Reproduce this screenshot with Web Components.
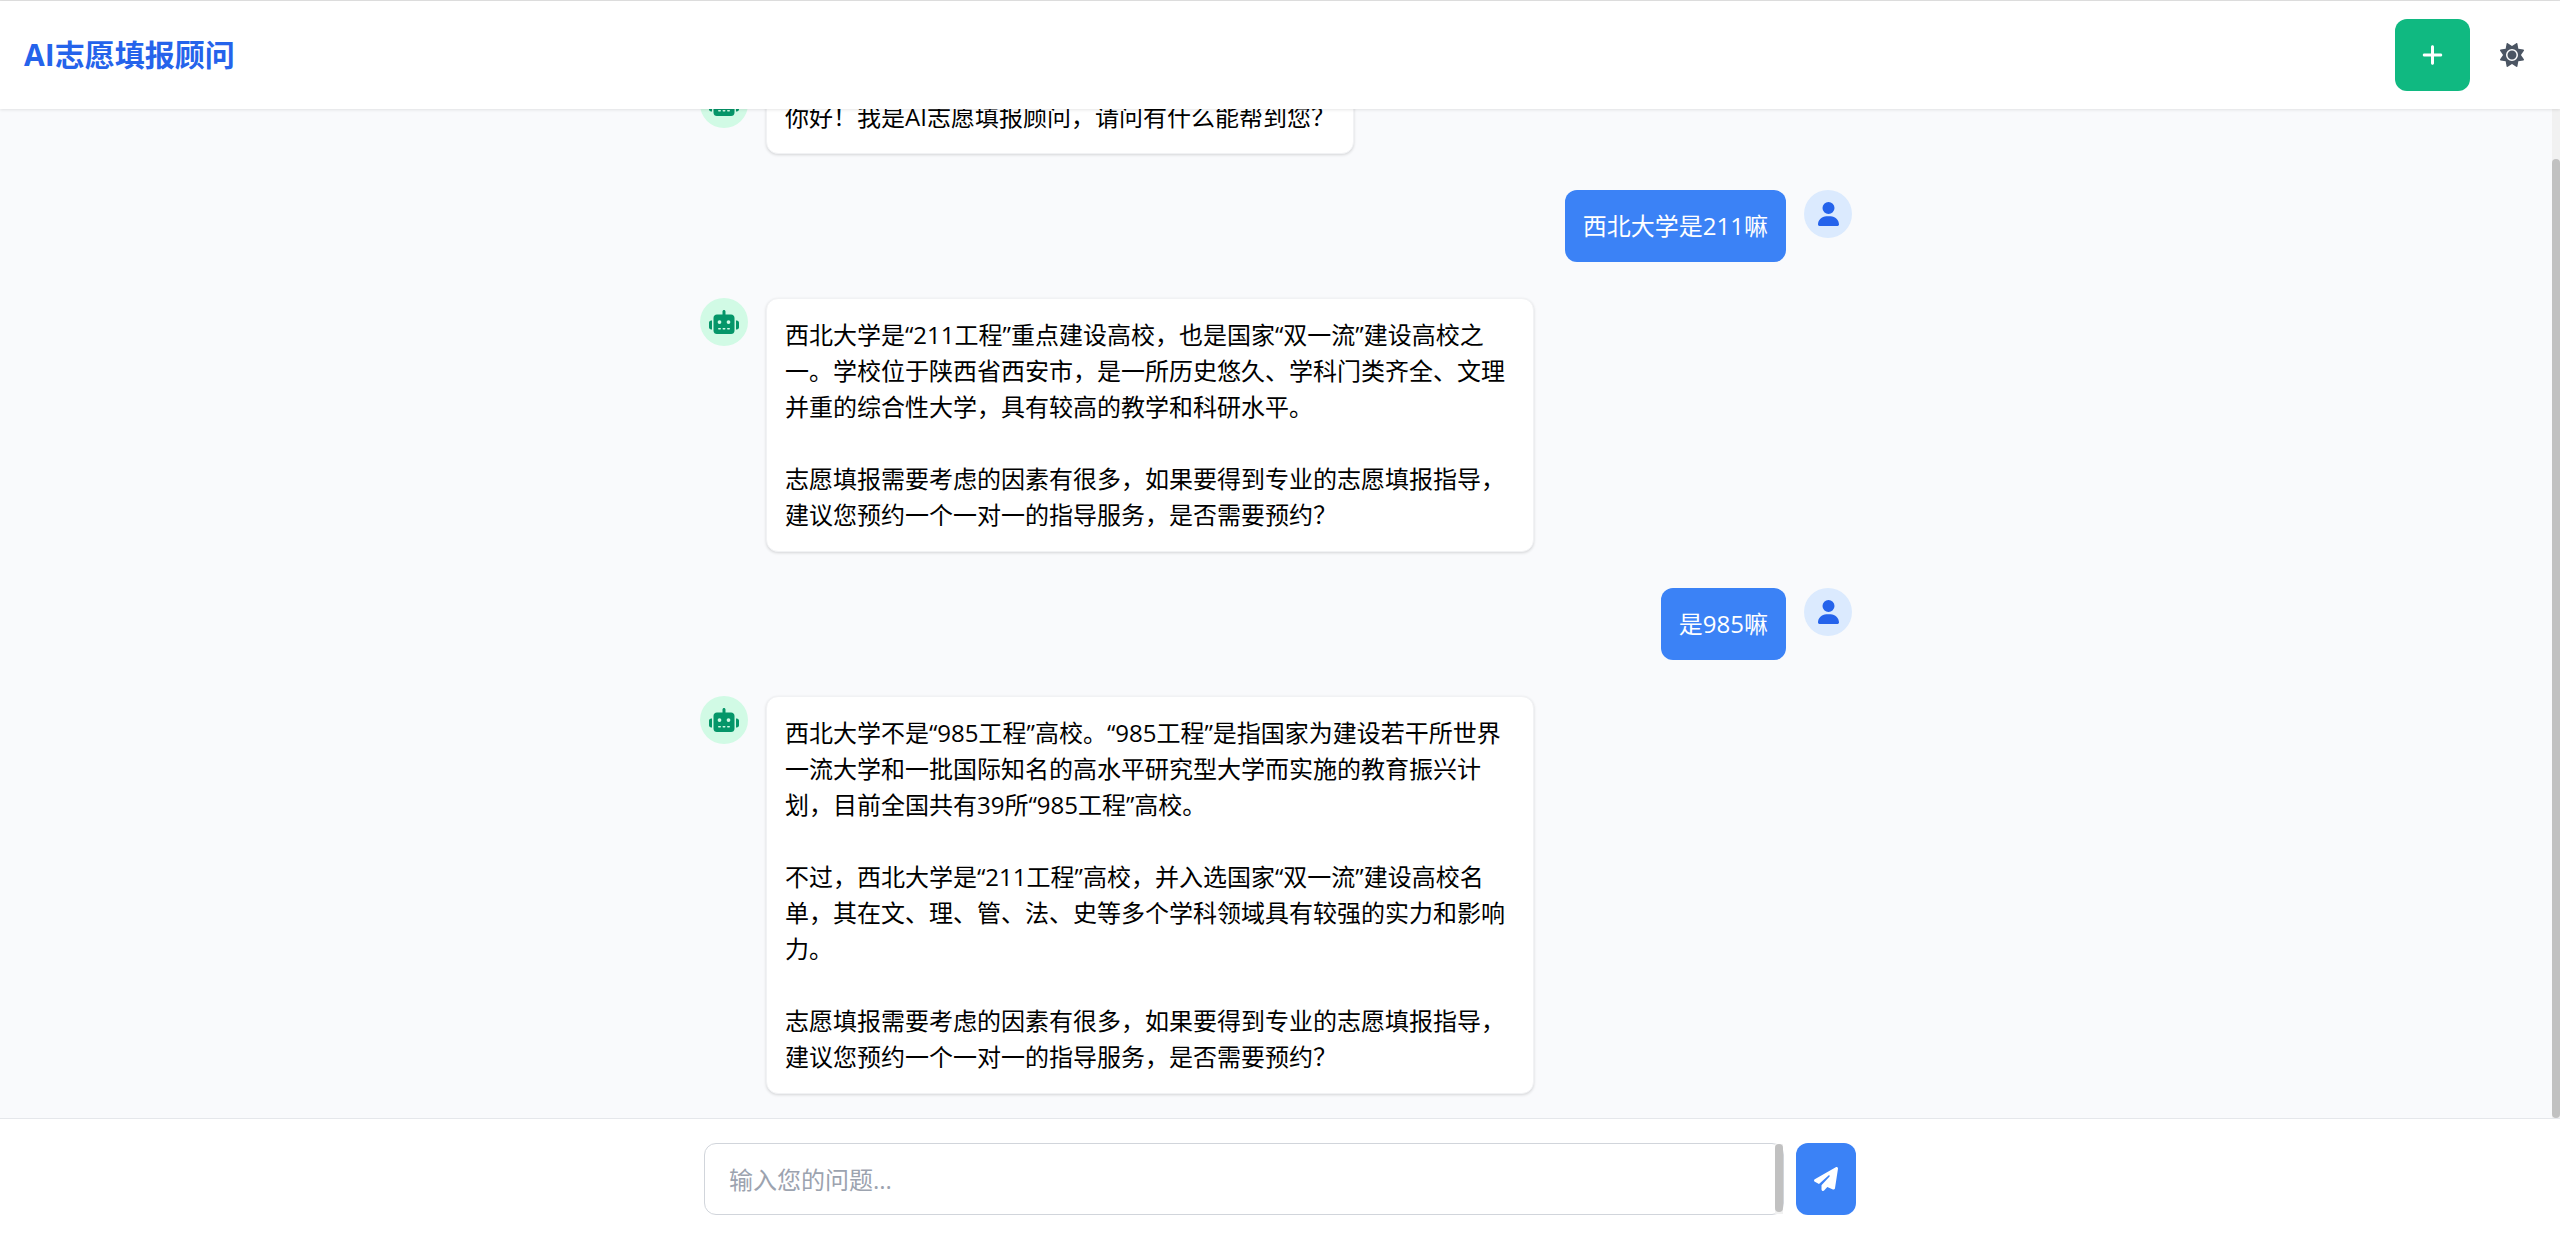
<!DOCTYPE html>
<html lang="zh-CN">
<head>
<meta charset="utf-8">
<meta name="viewport" content="width=device-width, initial-scale=1">
<title>AI志愿填报顾问</title>
<style>
  html { height: 100%; overflow: hidden; }
  body {
    margin: 0;
    height: 100%;
    color: #000;
    font: 24px/36px "Open Sans", "Noto Sans CJK SC", sans-serif;
  }
</style>
</head>
<body>
<chat-app>
  <chat-header slot="header">AI志愿填报顾问</chat-header>
  <chat-log slot="log">
    <chat-message from="bot"><p>你好！我是AI志愿填报顾问，请问有什么能帮到您？</p></chat-message>
    <chat-message from="user"><p>西北大学是211嘛</p></chat-message>
    <chat-message from="bot"><p>西北大学是“211工程”重点建设高校，也是国家“双一流”建设高校之一。学校位于陕西省西安市，是一所历史悠久、学科门类齐全、文理并重的综合性大学，具有较高的教学和科研水平。</p><p>志愿填报需要考虑的因素有很多，如果要得到专业的志愿填报指导，建议您预约一个一对一的指导服务，是否需要预约？</p></chat-message>
    <chat-message from="user"><p>是985嘛</p></chat-message>
    <chat-message from="bot"><p>西北大学不是“985工程”高校。“985工程”是指国家为建设若干所世界一流大学和一批国际知名的高水平研究型大学而实施的教育振兴计划，目前全国共有39所“985工程”高校。</p><p>不过，西北大学是“211工程”高校，并入选国家“双一流”建设高校名单，其在文、理、管、法、史等多个学科领域具有较强的实力和影响力。</p><p>志愿填报需要考虑的因素有很多，如果要得到专业的志愿填报指导，建议您预约一个一对一的指导服务，是否需要预约？</p></chat-message>
  </chat-log>
  <chat-composer slot="composer"></chat-composer>
</chat-app>

<script>
const icons = {
  plus: [448, 'M256 80c0-17.7-14.3-32-32-32s-32 14.3-32 32V224H48c-17.7 0-32 14.3-32 32s14.3 32 32 32H192V432c0 17.7 14.3 32 32 32s32-14.3 32-32V288H400c17.7 0 32-14.3 32-32s-14.3-32-32-32H256V80z'],
  sun: [512, 'M361.5 1.2c5 2.1 8.6 6.6 9.6 11.9L391 121l107.9 19.8c5.3 1 9.8 4.6 11.9 9.6s1.5 10.7-1.6 15.2L446.9 256l62.3 90.3c3.1 4.5 3.7 10.2 1.6 15.2s-6.6 8.6-11.9 9.6L391 391 371.1 498.9c-1 5.3-4.6 9.8-9.6 11.9s-10.7 1.5-15.2-1.6L256 446.9l-90.3 62.3c-4.5 3.1-10.2 3.7-15.2 1.6s-8.6-6.6-9.6-11.9L121 391 13.1 371.1c-5.3-1-9.8-4.6-11.9-9.6s-1.5-10.7 1.6-15.2L65.1 256 2.8 165.7c-3.1-4.5-3.7-10.2-1.6-15.2s6.6-8.6 11.9-9.6L121 121 140.9 13.1c1-5.3 4.6-9.8 9.6-11.9s10.7-1.5 15.2 1.6L256 65.1 346.3 2.8c4.5-3.1 10.2-3.7 15.2-1.6zM160 256a96 96 0 1 1 192 0 96 96 0 1 1 -192 0zm224 0a128 128 0 1 0 -256 0 128 128 0 1 0 256 0z'],
  robot: [640, 'M320 0c17.7 0 32 14.3 32 32V96H472c39.8 0 72 32.2 72 72V440c0 39.8-32.2 72-72 72H168c-39.8 0-72-32.2-72-72V168c0-39.8 32.2-72 72-72H288V32c0-17.7 14.3-32 32-32zM208 384c-8.8 0-16 7.2-16 16s7.2 16 16 16h32c8.8 0 16-7.2 16-16s-7.2-16-16-16H208zm96 0c-8.8 0-16 7.2-16 16s7.2 16 16 16h32c8.8 0 16-7.2 16-16s-7.2-16-16-16H304zm96 0c-8.8 0-16 7.2-16 16s7.2 16 16 16h32c8.8 0 16-7.2 16-16s-7.2-16-16-16H400zM264 256a40 40 0 1 0 -80 0 40 40 0 1 0 80 0zm152 40a40 40 0 1 0 0-80 40 40 0 1 0 0 80zM48 224H64V416H48c-26.5 0-48-21.5-48-48V272c0-26.5 21.5-48 48-48zm544 0c26.5 0 48 21.5 48 48v96c0 26.5-21.5 48-48 48H576V224h16z'],
  user: [448, 'M224 256A128 128 0 1 0 224 0a128 128 0 1 0 0 256zm-45.7 48C79.8 304 0 383.8 0 482.3C0 498.7 13.3 512 29.7 512H418.3c16.4 0 29.7-13.3 29.7-29.7C448 383.8 368.2 304 269.7 304H178.3z'],
  plane: [512, 'M498.1 5.6c10.1 7 15.4 19.1 13.5 31.2l-64 416c-1.5 9.7-7.4 18.2-16 23s-18.9 5.4-28 1.6L284 427.7l-68.5 74.1c-8.9 9.7-22.9 12.9-35.2 8.1S160 493.2 160 480V396.4c0-4 1.5-7.8 4.2-10.7L331.8 202.8c5.8-6.3 5.6-16-.4-22s-15.7-6.4-22-.7L106 360.8 17.7 316.6C7.1 311.3 .3 300.7 0 288.9s5.9-22.8 16.1-28.7l448-256c10.7-6.1 23.9-5.5 34 1.4z']
};

function define(name, html, setup) {
  const template = document.createElement('template');
  template.innerHTML = html;
  customElements.define(name, class extends HTMLElement {
    connectedCallback() {
      if (this.shadowRoot) return;
      this.attachShadow({ mode: 'open' }).append(template.content.cloneNode(true));
      if (setup) setup(this, this.shadowRoot);
    }
  });
}

define('app-icon', `
  <style>
    :host { display: block; }
    svg { display: block; height: 24px; fill: currentColor; }
  </style>
  <svg aria-hidden="true"><path/></svg>`, (host, root) => {
  const [width, d] = icons[host.getAttribute('name')];
  const svg = root.querySelector('svg');
  svg.setAttribute('viewBox', `0 0 ${width} 512`);
  svg.style.width = `${width * 24 / 512}px`;
  root.querySelector('path').setAttribute('d', d);
});

/* Slim scrollbar: flex weights before, on and after the thumb follow the scrolled element. */
define('scroll-rail', `
  <style>
    :host { display: flex; flex-direction: column; flex: none; width: 8px; background: #f1f1f1; }
    div { flex: 0 1 0px; min-height: 0; }
    .thumb { background: #c1c1c1; border-radius: 4px; }
  </style>
  <div class="before"></div><div class="thumb"></div><div class="after"></div>`, (host, root) => {
  const [before, thumb, after] = root.querySelectorAll('div');
  host.follow = (el, content = () => el.scrollHeight) => {
    const update = () => {
      const total = Math.max(content(), el.clientHeight);
      before.style.flexGrow = el.scrollTop;
      thumb.style.flexGrow = el.clientHeight;
      after.style.flexGrow = Math.max(0, total - el.clientHeight - el.scrollTop);
    };
    el.addEventListener('scroll', update);
    el.addEventListener('input', update);
    new ResizeObserver(update).observe(el);
    update();
    return update;
  };
});

define('chat-header', `
  <style>
    :host {
      display: flex; align-items: center; justify-content: space-between;
      padding: 18px 24px; background: #fff;
      box-shadow: 0 1px 3px rgba(0,0,0,.1);
    }
    h1 { margin: 0; font-size: 30px; line-height: 42px; font-weight: 700; color: #2563eb; }
    .actions { display: flex; align-items: center; gap: 18px; }
    button { display: flex; align-items: center; justify-content: center; border: 0; border-radius: 12px; height: 72px; cursor: pointer; }
    .new { padding: 0 27px; background: #10b981; color: #fff; }
    .theme { padding: 0 12px; background: transparent; color: #4b5563; }
  </style>
  <h1><slot></slot></h1>
  <div class="actions">
    <button class="new" type="button" aria-label="新建对话"><app-icon name="plus"></app-icon></button>
    <button class="theme" type="button" aria-label="切换主题"><app-icon name="sun"></app-icon></button>
  </div>`);

define('chat-message', `
  <style>
    :host { display: flex; align-items: flex-start; gap: 18px; }
    :host([from="user"]) { flex-direction: row-reverse; }
    .avatar {
      flex: none; display: flex; align-items: center; justify-content: center;
      width: 48px; height: 48px; border-radius: 50%;
      background: #d1fae5; color: #059669;
    }
    .bubble {
      display: flex; flex-direction: column; gap: 36px;
      box-sizing: border-box; max-width: 768px; padding: 18px;
      border-radius: 12px; border: 1px solid #f1f2f4; background: #fff;
      box-shadow: 0 1px 3px rgba(0,0,0,.15);
    }
    :host([from="user"]) .avatar { background: #dbeafe; color: #2563eb; }
    :host([from="user"]) .bubble { background: #3b82f6; color: #fff; border: 0; box-shadow: none; }
    ::slotted(p) { margin: 0; }
  </style>
  <div class="avatar"></div>
  <div class="bubble"><slot></slot></div>`, (host, root) => {
  const icon = document.createElement('app-icon');
  icon.setAttribute('name', host.getAttribute('from') === 'user' ? 'user' : 'robot');
  root.querySelector('.avatar').append(icon);
});

define('chat-log', `
  <style>
    :host { display: flex; background: #f9fafc; }
    .view { flex: 1; min-width: 0; overflow-y: auto; scrollbar-width: none; }
    .column { display: flex; flex-direction: column; gap: 36px; max-width: 1152px; margin: 0 auto; padding: 24px 0; }
  </style>
  <div class="view"><div class="column"><slot></slot></div></div>
  <scroll-rail></scroll-rail>`, (host, root) => {
  const view = root.querySelector('.view');
  const update = root.querySelector('scroll-rail').follow(view);
  host.toLatest = () => { view.scrollTop = view.scrollHeight; update(); };
});

define('chat-composer', `
  <style>
    :host { display: block; padding: 24px 24px 23px; border-top: 1px solid #e5e7eb; background: #fff; }
    form { display: flex; gap: 12px; max-width: 1152px; margin: 0 auto; }
    .field {
      display: flex; flex: 1; min-width: 0; box-sizing: border-box; height: 72px;
      border: 1px solid #d1d5db; border-radius: 12px;
    }
    textarea {
      flex: 1; min-width: 0; box-sizing: border-box; height: 70px; margin: 0; padding: 18px 24px;
      font: inherit; color: inherit; background: transparent;
      border: 0; outline: 0; resize: none; scrollbar-width: none;
    }
    textarea::placeholder { color: #9ca3af; }
    button { display: flex; align-items: center; padding: 0 18px; border: 0; border-radius: 12px; background: #3b82f6; color: #fff; cursor: pointer; }
  </style>
  <form>
    <div class="field">
      <textarea rows="1" placeholder="输入您的问题..." aria-label="输入您的问题"></textarea>
      <scroll-rail></scroll-rail>
    </div>
    <button type="button" aria-label="发送"><app-icon name="plane"></app-icon></button>
  </form>`, (host, root) => {
  const box = root.querySelector('textarea');
  /* One line of text with its padding is 72px tall. */
  root.querySelector('scroll-rail').follow(box, () => Math.max(box.scrollHeight, 72));
});

define('chat-app', `
  <style>
    :host { display: flex; flex-direction: column; box-sizing: border-box; height: 100vh; border-top: 1px solid #e0e0e0; }
    ::slotted(chat-header) { flex: none; position: relative; z-index: 1; }
    ::slotted(chat-log) { flex: 1; min-height: 0; }
    ::slotted(chat-composer) { flex: none; }
  </style>
  <slot name="header"></slot>
  <slot name="log"></slot>
  <slot name="composer"></slot>`);

/* Open the conversation at its latest message. */
const log = document.querySelector('chat-log');
log.toLatest();
window.addEventListener('load', () => log.toLatest());
</script>
</body>
</html>
